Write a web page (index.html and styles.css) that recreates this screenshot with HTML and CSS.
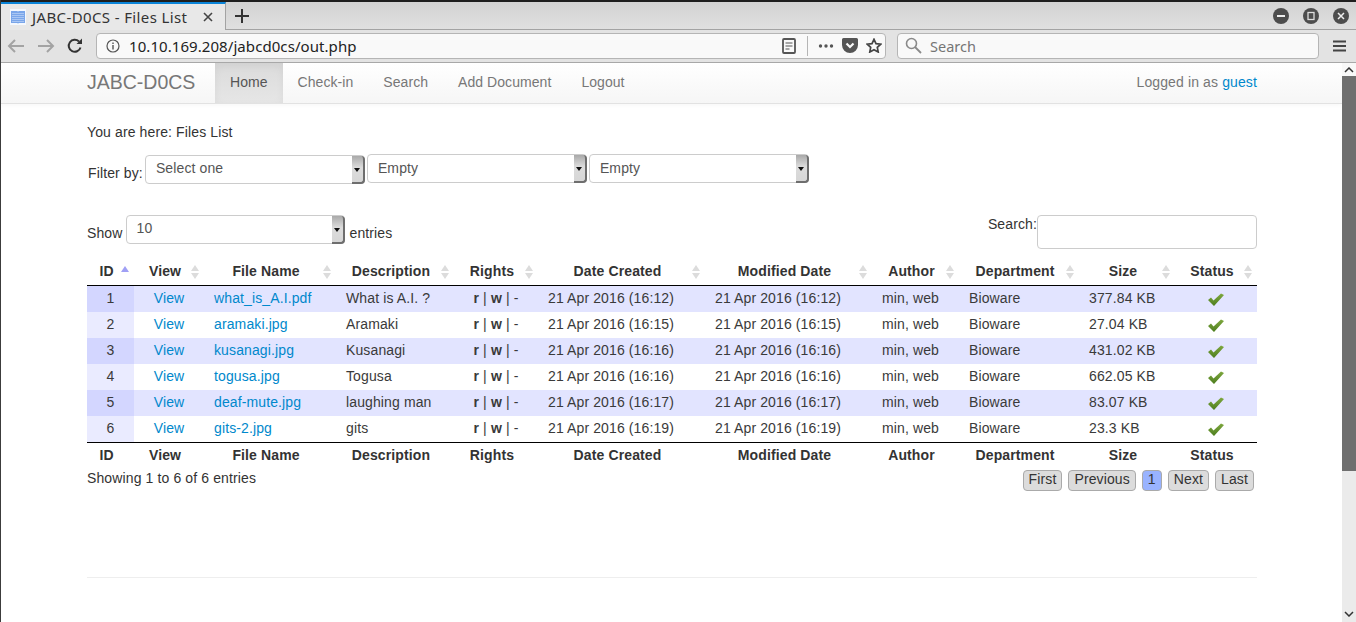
FILE: index.html

```html
<!DOCTYPE html>
<html lang="en">
<head>
  <meta charset="UTF-8">
  <title>JABC-D0CS - Files List</title>
  <link rel="stylesheet" href="styles.css">
</head>
<body>
  <svg class="sprite" width="0" height="0">
    <defs>
      <linearGradient id="check-fill" x1="0" y1="0" x2="0" y2="1">
        <stop offset="0" stop-color="#7fa83f"/>
        <stop offset="1" stop-color="#4c7d1e"/>
      </linearGradient>
      <symbol id="check" viewBox="0 0 16 13">
        <path d="M0 7l3-2.500 2.500 3L13 .5 16 2 6 13z" fill="url(#check-fill)"/>
      </symbol>
    </defs>
  </svg>

  <!-- browser window -->
  <div class="tabstrip">
    <div class="tab">
      <svg class="favicon" width="16" height="16" viewBox="0 0 16 16">
        <rect width="16" height="16" fill="#f4f8fe"/>
        <path d="M1 2h6.500l.5 1 .5-1H15v12H8.500l-.5 1-.5-1H1z" fill="#7aa6ea"/>
        <path d="M2 4.500h12M2 6.500h12M2 8.500h12M2 10.500h12M2 12.500h12" stroke="#a9c6f3" stroke-width="1"/>
      </svg>
      <span class="tab-title">JABC-D0CS - Files List</span>
      <svg class="tab-close" width="10" height="10" viewBox="0 0 10 10">
        <path d="M1 1l8 8M9 1l-8 8" stroke="#444" stroke-width="1.600"/>
      </svg>
    </div>
    <svg class="newtab" width="14" height="14" viewBox="0 0 14 14">
      <path d="M7 0v14M0 7h14" stroke="#333" stroke-width="2"/>
    </svg>
    <div class="window-btns">
      <span class="win-btn"><svg width="16" height="16" viewBox="0 0 16 16"><path d="M4 8h8" stroke="#eee" stroke-width="2"/></svg></span>
      <span class="win-btn"><svg width="16" height="16" viewBox="0 0 16 16"><rect x="5" y="4.500" width="6" height="7" fill="none" stroke="#ddd" stroke-width="1.300"/></svg></span>
      <span class="win-btn"><svg width="16" height="16" viewBox="0 0 16 16"><path d="M5 5l6 6M11 5l-6 6" stroke="#eee" stroke-width="1.500"/></svg></span>
    </div>
  </div>
  <div class="toolbar">
    <svg class="nav-icon" width="18" height="16" viewBox="0 0 18 16"><path d="M17 8H2M8 2L2 8l6 6" fill="none" stroke="#a3a3a3" stroke-width="2"/></svg>
    <svg class="nav-icon" width="18" height="16" viewBox="0 0 18 16"><path d="M1 8h15M10 2l6 6-6 6" fill="none" stroke="#a3a3a3" stroke-width="2"/></svg>
    <svg class="nav-icon" width="16" height="16" viewBox="0 0 16 16"><path d="M13.500 9.500A6 6 0 1 1 12 3.500" fill="none" stroke="#333" stroke-width="2"/><path d="M9.500 6H15V.5z" fill="#333"/></svg>
    <div class="urlbar">
      <svg class="info-icon" width="14" height="14" viewBox="0 0 14 14"><circle cx="7" cy="7" r="6" fill="none" stroke="#555" stroke-width="1.200"/><path d="M7 6v4.500M7 3.500v1.500" stroke="#555" stroke-width="1.400"/></svg>
      <span class="url">10.10.169.208/jabcd0cs/out.php</span>
      <svg class="reader-icon" width="14" height="16" viewBox="0 0 14 16"><rect x="1" y="1" width="12" height="14" rx="1" fill="none" stroke="#555" stroke-width="1.800"/><path d="M3.500 5h7M3.500 8h7M3.500 11h4" stroke="#555" stroke-width="1"/></svg>
      <span class="url-sep"></span>
      <svg class="dots-icon" width="16" height="4" viewBox="0 0 16 4"><circle cx="2.500" cy="2" r="1.700" fill="#555"/><circle cx="8" cy="2" r="1.700" fill="#555"/><circle cx="13.500" cy="2" r="1.700" fill="#555"/></svg>
      <svg class="pocket-icon" width="16" height="15" viewBox="0 0 16 15"><path d="M1.500 0h13A1.500 1.500 0 0 1 16 1.500V7A8 8 0 0 1 0 7V1.500A1.500 1.500 0 0 1 1.500 0z" fill="#555"/><path d="M4.500 5.500L8 9l3.500-3.500" fill="none" stroke="#f9f9f9" stroke-width="2.200"/></svg>
      <svg class="star-icon" width="16" height="15" viewBox="0 0 16 15"><path d="M8 1.300l2 4.300 4.700.6-3.400 3.200.9 4.600L8 11.700l-4.200 2.300.9-4.600L1.300 6.200 6 5.600z" fill="none" stroke="#444" stroke-width="1.700"/></svg>
    </div>
    <div class="searchbar">
      <svg width="17" height="17" viewBox="0 0 17 17"><circle cx="6.500" cy="6.500" r="5" fill="none" stroke="#8a8a8a" stroke-width="1.600"/><path d="M10 10l6 6" stroke="#8a8a8a" stroke-width="1.800"/></svg>
      <span>Search</span>
    </div>
    <svg class="menu-icon" width="13" height="12" viewBox="0 0 13 12"><path d="M0 1.500h13M0 6h13M0 10.500h13" stroke="#444" stroke-width="2"/></svg>
  </div>

  <div class="viewport">
    <div class="page">
      <nav class="navbar">
        <div class="container navbar-inner">
          <a class="brand">JABC-D0CS</a>
          <ul class="nav">
            <li class="active"><a>Home</a></li>
            <li><a>Check-in</a></li>
            <li><a>Search</a></li>
            <li><a>Add Document</a></li>
            <li><a>Logout</a></li>
          </ul>
          <p class="nav-text">Logged in as <a class="link">guest</a></p>
        </div>
      </nav>

      <div class="container">
        <p class="crumb">You are here: Files List</p>
        <div class="filters">
          <label class="filter-label">Filter by:</label>
          <div class="select select-filter"><span>Select one</span><b class="select-arrow"></b></div>
          <div class="select select-filter"><span>Empty</span><b class="select-arrow"></b></div>
          <div class="select select-filter"><span>Empty</span><b class="select-arrow"></b></div>
        </div>

        <div class="dt-top">
          <div class="dt-length">
            Show
            <div class="select select-length"><span>10</span><b class="select-arrow"></b></div>
            entries
          </div>
          <div class="dt-search">
            <label>Search:</label>
            <input type="text" class="search-input">
          </div>
        </div>

        <table class="files">
          <colgroup>
            <col class="c-id"><col class="c-view"><col class="c-name"><col class="c-desc"><col class="c-rights">
            <col class="c-date"><col class="c-date2"><col class="c-author"><col class="c-dept"><col class="c-size"><col class="c-status">
          </colgroup>
          <thead>
            <tr>
              <th class="sorting-asc">ID</th>
              <th class="sorting">View</th>
              <th class="sorting">File Name</th>
              <th class="sorting">Description</th>
              <th class="sorting">Rights</th>
              <th class="sorting">Date Created</th>
              <th class="sorting">Modified Date</th>
              <th class="sorting">Author</th>
              <th class="sorting">Department</th>
              <th class="sorting">Size</th>
              <th class="sorting">Status</th>
            </tr>
          </thead>
          <tbody>
            <tr class="odd">
              <td class="sorted center">1</td><td class="center"><a class="link">View</a></td><td><a class="link">what_is_A.I.pdf</a></td><td>What is A.I. ?</td>
              <td class="center"><b>r</b> | <b>w</b> | -</td><td>21 Apr 2016 (16:12)</td><td>21 Apr 2016 (16:12)</td><td>min, web</td><td>Bioware</td><td>377.84 KB</td>
              <td class="center"><svg class="check" width="16" height="13"><use href="#check"/></svg></td>
            </tr>
            <tr class="even">
              <td class="sorted center">2</td><td class="center"><a class="link">View</a></td><td><a class="link">aramaki.jpg</a></td><td>Aramaki</td>
              <td class="center"><b>r</b> | <b>w</b> | -</td><td>21 Apr 2016 (16:15)</td><td>21 Apr 2016 (16:15)</td><td>min, web</td><td>Bioware</td><td>27.04 KB</td>
              <td class="center"><svg class="check" width="16" height="13"><use href="#check"/></svg></td>
            </tr>
            <tr class="odd">
              <td class="sorted center">3</td><td class="center"><a class="link">View</a></td><td><a class="link">kusanagi.jpg</a></td><td>Kusanagi</td>
              <td class="center"><b>r</b> | <b>w</b> | -</td><td>21 Apr 2016 (16:16)</td><td>21 Apr 2016 (16:16)</td><td>min, web</td><td>Bioware</td><td>431.02 KB</td>
              <td class="center"><svg class="check" width="16" height="13"><use href="#check"/></svg></td>
            </tr>
            <tr class="even">
              <td class="sorted center">4</td><td class="center"><a class="link">View</a></td><td><a class="link">togusa.jpg</a></td><td>Togusa</td>
              <td class="center"><b>r</b> | <b>w</b> | -</td><td>21 Apr 2016 (16:16)</td><td>21 Apr 2016 (16:16)</td><td>min, web</td><td>Bioware</td><td>662.05 KB</td>
              <td class="center"><svg class="check" width="16" height="13"><use href="#check"/></svg></td>
            </tr>
            <tr class="odd">
              <td class="sorted center">5</td><td class="center"><a class="link">View</a></td><td><a class="link">deaf-mute.jpg</a></td><td>laughing man</td>
              <td class="center"><b>r</b> | <b>w</b> | -</td><td>21 Apr 2016 (16:17)</td><td>21 Apr 2016 (16:17)</td><td>min, web</td><td>Bioware</td><td>83.07 KB</td>
              <td class="center"><svg class="check" width="16" height="13"><use href="#check"/></svg></td>
            </tr>
            <tr class="even">
              <td class="sorted center">6</td><td class="center"><a class="link">View</a></td><td><a class="link">gits-2.jpg</a></td><td>gits</td>
              <td class="center"><b>r</b> | <b>w</b> | -</td><td>21 Apr 2016 (16:19)</td><td>21 Apr 2016 (16:19)</td><td>min, web</td><td>Bioware</td><td>23.3 KB</td>
              <td class="center"><svg class="check" width="16" height="13"><use href="#check"/></svg></td>
            </tr>
          </tbody>
          <tfoot>
            <tr>
              <th>ID</th><th>View</th><th>File Name</th><th>Description</th><th>Rights</th><th>Date Created</th>
              <th>Modified Date</th><th>Author</th><th>Department</th><th>Size</th><th>Status</th>
            </tr>
          </tfoot>
        </table>

        <div class="dt-bottom">
          <div class="dt-info">Showing 1 to 6 of 6 entries</div>
          <div class="pager">
            <a class="page-btn">First</a>
            <a class="page-btn">Previous</a>
            <a class="page-btn current">1</a>
            <a class="page-btn">Next</a>
            <a class="page-btn">Last</a>
          </div>
        </div>

        <hr class="rule">
      </div>
    </div>

    <div class="scrollbar">
      <div class="scroll-top">
        <svg width="10" height="6" viewBox="0 0 10 6"><path d="M1 5l4-4 4 4" fill="none" stroke="#333" stroke-width="1.500"/></svg>
      </div>
      <div class="scroll-thumb"></div>
      <svg class="scroll-down" width="10" height="6" viewBox="0 0 10 6"><path d="M1 1l4 4 4-4" fill="none" stroke="#333" stroke-width="1.500"/></svg>
    </div>
  </div>
</body>
</html>
```

FILE: styles.css

```css
* {
  box-sizing: border-box;
}
html, body {
  height: 100%;
}
body {
  margin: 0;
  display: flex;
  flex-direction: column;
  overflow: hidden;
  font-family: "Liberation Sans", Arial, sans-serif;
  font-size: 14px;
  line-height: 20px;
  letter-spacing: .12px;
  color: #333;
  background: #fff;
  border-left: 1px solid #3c3c3c;
}
.sprite {
  position: absolute;
}

/* browser chrome */
.tabstrip {
  height: 30px;
  flex: none;
  display: flex;
  align-items: center;
  background: linear-gradient(#d2d2d2, #e0e0e0);
  border-top: 2px solid #1e1e1e;
  border-bottom: 1px solid #a3a3a3;
  font-family: "Noto Sans", sans-serif;
  color: #333;
}
.tab {
  width: 225px;
  height: 28px;
  display: flex;
  align-items: center;
  padding: 0 10px 0 9px;
  background: #e8e8e8;
  border-top: 2px solid #0a84d8;
  border-right: 1px solid #a3a3a3;
  margin-bottom: -1px;
}
.tab-title {
  margin-left: 6px;
  flex: 1;
  font-size: 15px;
  letter-spacing: .38px;
  white-space: nowrap;
}
.tab-close {
  margin-right: 2px;
}
.newtab {
  margin-left: 9px;
}
.window-btns {
  margin-left: auto;
  display: flex;
  gap: 14px;
  padding-right: 7px;
}
.win-btn {
  width: 16px;
  height: 16px;
  border-radius: 50%;
  background: #4d4d4d;
  display: block;
}
.win-btn svg {
  display: block;
}
.toolbar {
  height: 33px;
  flex: none;
  display: flex;
  align-items: center;
  padding: 0 8px 1px 6px;
  background: #e3e3e3;
  border-bottom: 1px solid #a8a8a8;
  font-family: "Noto Sans", sans-serif;
  letter-spacing: 0;
}
.nav-icon {
  margin-right: 12px;
}
.urlbar {
  margin-left: 1px;
  width: 790px;
  height: 26px;
  display: flex;
  align-items: center;
  padding: 0 3px 0 9px;
  background: #f9f9f9;
  border: 1px solid #b5b5b5;
  border-radius: 4px;
}
.info-icon {
  margin-right: 9px;
}
.url {
  font-size: 15px;
  letter-spacing: .07px;
  color: #222;
  flex: 1;
}
.reader-icon {
  margin-right: 11px;
}
.url-sep {
  width: 1px;
  height: 20px;
  background: #b5b5b5;
  margin-right: 10px;
}
.dots-icon {
  margin-right: 8px;
}
.pocket-icon {
  margin-right: 8px;
}
.searchbar {
  margin-left: 11px;
  width: 422px;
  height: 26px;
  display: flex;
  align-items: center;
  gap: 8px;
  padding: 0 7px;
  background: #f9f9f9;
  border: 1px solid #b5b5b5;
  border-radius: 4px;
  font-size: 14.500px;
  color: #757575;
}
.menu-icon {
  margin-left: 14px;
}

.viewport {
  flex: 1;
  min-height: 0;
  display: flex;
}
.page {
  flex: 1;
  min-width: 0;
  overflow: hidden;
}
.scrollbar {
  width: 14px;
  flex: none;
  display: flex;
  flex-direction: column;
  align-items: center;
  background: #ebebeb;
}
.scroll-top {
  align-self: stretch;
  height: 13px;
  display: flex;
  justify-content: center;
  padding-top: 4px;
  background: #f8f8f8;
}
.scroll-thumb {
  align-self: stretch;
  height: 395px;
  background: #6f6f6f;
}
.scroll-down {
  margin: auto 0 5px;
}

/* navbar */
.container {
  width: 1170px;
  margin-left: 86px;
}
.navbar {
  height: 41px;
  background: linear-gradient(#fff, #f6f6f6);
  border-bottom: 1px solid #e2e2e2;
  box-shadow: 0 1px 5px rgba(0,0,0,.04);
}
.navbar-inner {
  display: flex;
  align-items: stretch;
  height: 40px;
}
.brand {
  font-size: 19.500px;
  line-height: 38px;
  letter-spacing: 0;
  color: #777;
  width: 128px;
}
.nav {
  display: flex;
  list-style: none;
  margin: 0;
  padding: 0;
}
.nav a {
  display: block;
  padding: 9px 15px 11px;
  letter-spacing: .06px;
  color: #777;
}
.nav .active a {
  color: #555;
  background: linear-gradient(#dbdbdb, #e6e6e6);
  box-shadow: inset 0 3px 9px rgba(0,0,0,.05);
}
.nav-text {
  margin: 9px 0 0 auto;
  color: #777;
}
.link {
  color: #0088cc;
  text-decoration: none;
}

/* page */
.crumb {
  margin: 18px 0 0;
}
.filters {
  display: flex;
  align-items: flex-start;
  margin-top: 12px;
  gap: 2px;
  height: 30px;
}
.filter-label {
  margin: 9px 0 0 1px;
}
.select {
  position: relative;
  height: 29px;
  padding: 3px 10px;
  color: #555;
  background: #fff;
  border: 1px solid #ccc;
  border-radius: 4px;
}
.select-filter {
  width: 220px;
}
.select-filter:first-of-type {
  margin-top: 1px;
  padding-top: 2px;
}
.select-length {
  width: 219px;
  padding-top: 2px;
}
.select-arrow {
  position: absolute;
  top: 0;
  right: -1px;
  bottom: -1px;
  width: 13px;
  background: linear-gradient(#a9a9a9, #dcdcdc 45%, #d6d6d6);
  border-right: 2px solid #6e6e6e;
  border-bottom: 2px solid #6e6e6e;
  border-radius: 0 4px 4px 0;
}
.select-arrow::after {
  content: "";
  position: absolute;
  left: 2px;
  top: 12px;
  border: 3.500px solid transparent;
  border-top: 4px solid #111;
  border-bottom: 0;
}

.dt-top {
  display: flex;
  justify-content: space-between;
  align-items: flex-start;
  margin-top: 31px;
  height: 43px;
}
.dt-length {
  display: flex;
  align-items: flex-start;
  gap: 3px;
  line-height: 37px;
}
.dt-length .select {
  line-height: 20px;
  margin-right: 2px;
}
.dt-search {
  display: flex;
  align-items: flex-start;
}
.dt-search label {
  margin-top: -1px;
}
.search-input {
  width: 220px;
  height: 34px;
  border: 1px solid #ccc;
  border-radius: 4px;
  background: #fff;
}

.files {
  width: 1170px;
  table-layout: fixed;
  border-collapse: separate;
  border-spacing: 0;
  color: #333;
}
.c-id { width: 47px; }
.c-view { width: 70px; }
.c-name { width: 132px; }
.c-desc { width: 118px; }
.c-rights { width: 84px; }
.c-date { width: 167px; }
.c-date2 { width: 167px; }
.c-author { width: 87px; }
.c-dept { width: 120px; }
.c-size { width: 96px; }
.c-status { width: 82px; }

.files th {
  position: relative;
  text-align: center;
  font-weight: bold;
}
.files thead th {
  height: 28px;
  padding: 3px 18px 4px 10px;
  border-bottom: 1px solid #000;
}
.files tfoot th {
  height: 27px;
  padding: 2px 18px 4px 10px;
  border-top: 1px solid #000;
}
.files td {
  height: 26px;
  padding: 2px 10px 4px;
  white-space: nowrap;
  color: #3a3a3a;
}
.files td .link {
  color: #0088cc;
}
.files .center {
  text-align: center;
}
.odd td {
  background: #e2e4ff;
}
.odd .sorted {
  background: #d3d6ff;
}
.even .sorted {
  background: #eaebff;
}
.check {
  display: block;
  margin: 2px auto 0;
}
/* sort arrows from css triangles */
.sorting::before,
.sorting::after,
.sorting-asc::after {
  content: "";
  position: absolute;
  right: 5px;
  border-left: 4.500px solid transparent;
  border-right: 4.500px solid transparent;
}
.sorting::before {
  top: 7px;
  border-bottom: 6px solid #dcdcdc;
}
.sorting::after {
  top: 15px;
  border-top: 6px solid #dcdcdc;
}
.sorting-asc::after {
  top: 8px;
  border-bottom: 6px solid #a0a0f5;
}

.dt-bottom {
  display: flex;
  justify-content: space-between;
  align-items: flex-start;
  height: 108px;
}
.dt-info {
  margin-top: -1px;
}
.pager {
  display: flex;
  gap: 6px;
  padding-right: 3px;
  margin-top: 1px;
}
.page-btn {
  height: 21px;
  line-height: 17px;
  padding: 0 5px;
  color: #333;
  background: #dcdcdc;
  border: 1px solid #aaa;
  border-radius: 4px;
}
.page-btn.current {
  background: #99b3ff;
}
.rule {
  margin: 0;
  border: 0;
  border-top: 1px solid #eee;
}
```
